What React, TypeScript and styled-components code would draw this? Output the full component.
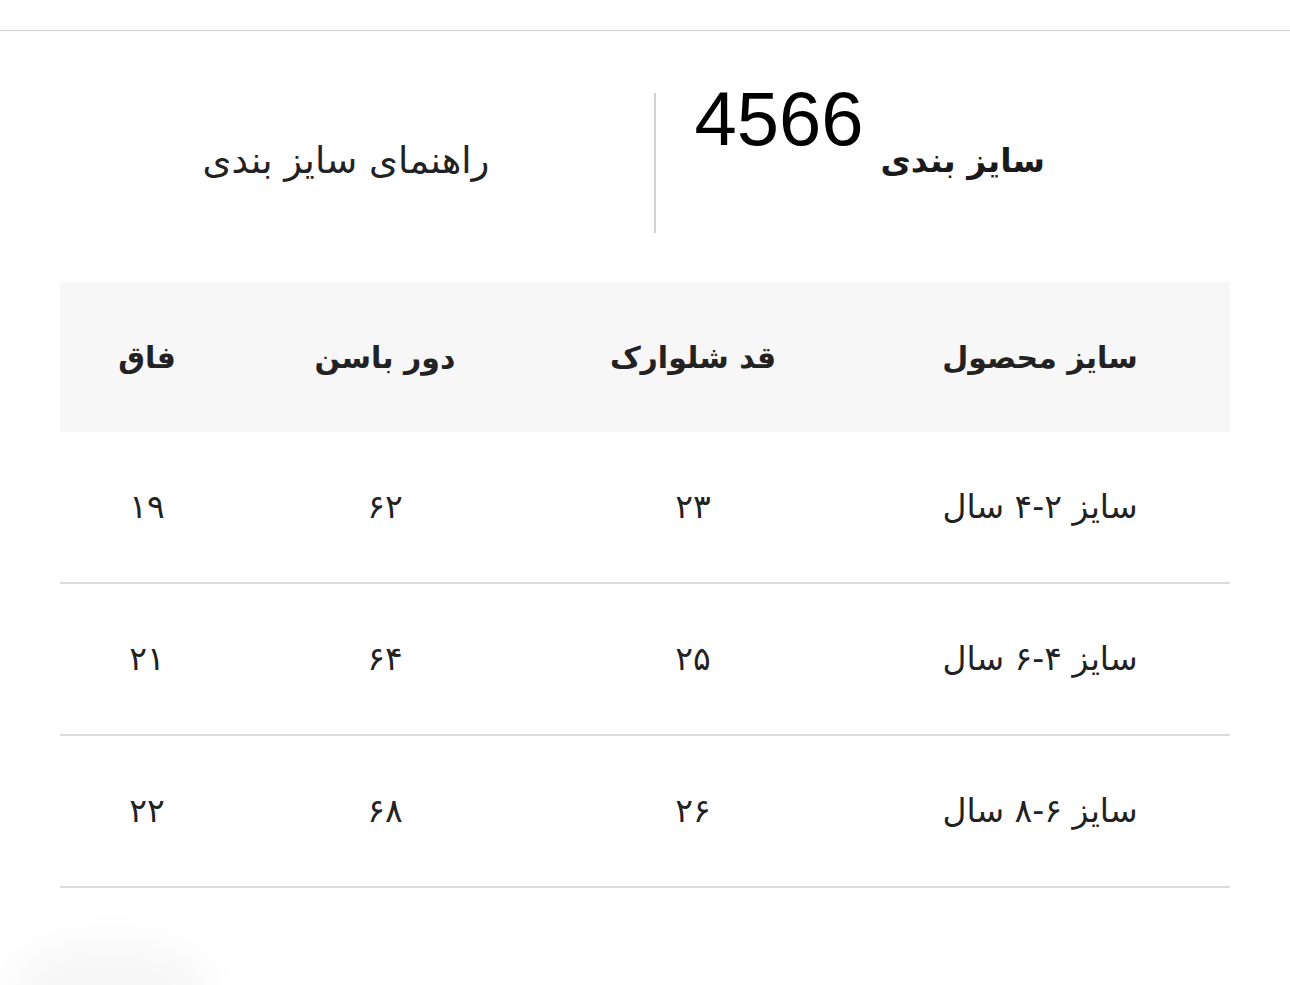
import React from "react";
import styled, {createGlobalStyle} from "styled-components";

const GlobalStyle = createGlobalStyle`
  html, body {
    margin: 0;
    padding: 0;
    background: #fff;
  }
  body {
    font-family: "DejaVu Sans", "Noto Sans", sans-serif;
    color: #222;
  }
`;

type Row = {size: string; length: string; hip: string; rise: string};

const rows: Row[] = [
  {size: "سایز ۲-۴ سال", length: "۲۳", hip: "۶۲", rise: "۱۹"},
  {size: "سایز ۴-۶ سال", length: "۲۵", hip: "۶۴", rise: "۲۱"},
  {size: "سایز ۶-۸ سال", length: "۲۶", hip: "۶۸", rise: "۲۲"},
];

const columns = [
  {title: "سایز محصول", width: 380},
  {title: "قد شلوارک", width: 314},
  {title: "دور باسن", width: 302},
  {title: "فاق", width: 174},
];

const App: React.FC = () => {
  return (
    <Page dir="rtl">
      <GlobalStyle/>
      <TopBar/>
      <Header>
        <TitleSide>
          <Title>سایز بندی</Title>
          <Code>4566</Code>
        </TitleSide>
        <Divider/>
        <GuideSide>
          <Guide>راهنمای سایز بندی</Guide>
        </GuideSide>
      </Header>
      <Table>
        <colgroup>
          {columns.map((c) => (
            <col key={c.title} style={{width: c.width}}/>
          ))}
        </colgroup>
        <thead>
          <tr>
            {columns.map((c) => (
              <Th key={c.title}>{c.title}</Th>
            ))}
          </tr>
        </thead>
        <tbody>
          {rows.map((r) => (
            <Tr key={r.size}>
              <Td>{r.size}</Td>
              <Td>{r.length}</Td>
              <Td>{r.hip}</Td>
              <Td>{r.rise}</Td>
            </Tr>
          ))}
        </tbody>
      </Table>
      <FloatShadow/>
    </Page>
  );
};

const Page = styled.div`
  width: 1290px;
  min-height: 985px;
  position: relative;
  overflow: hidden;
`;

const TopBar = styled.div`
  margin-top: 30px;
  height: 1px;
  background: #cfcfcf;
`;

const Header = styled.div`
  display: flex;
  align-items: stretch;
  padding: 62px 60px 0;
  height: 140px;
`;

const TitleSide = styled.div`
  width: 574px;
  display: flex;
  align-items: flex-start;
  padding-right: 185px;
  box-sizing: border-box;
`;

const Title = styled.h2`
  margin: 46px 0 0;
  font-family: "DejaVu Sans", sans-serif;
  font-weight: 700;
  font-size: 33px;
  line-height: 44px;
  color: #1a1a1a;
`;

const Code = styled.span`
  margin-right: 17px;
  margin-top: -19px;
  font-family: "Liberation Sans", Arial, sans-serif;
  font-size: 76px;
  line-height: 90px;
  color: #000;
`;

const Divider = styled.div`
  width: 2px;
  background: #d2d2d2;
`;

const GuideSide = styled.div`
  flex: 1;
  display: flex;
  justify-content: center;
  padding-right: 22px;
`;

const Guide = styled.div`
  margin-top: 44px;
  font-size: 37px;
  line-height: 48px;
  color: #222;
`;

const Table = styled.table`
  margin: 49px 60px 0;
  width: 1170px;
  border-collapse: collapse;
  table-layout: fixed;
`;

const Th = styled.th`
  height: 150px;
  padding: 0;
  background: #f7f7f7;
  font-weight: 700;
  font-size: 30px;
  color: #222;
  text-align: center;
`;

const Tr = styled.tr`
  border-bottom: 2px solid #dcdcdc;
`;

const Td = styled.td`
  height: 150px;
  padding: 0;
  font-size: 33px;
  line-height: 40px;
  color: #222;
  text-align: center;
`;

const FloatShadow = styled.div`
  position: absolute;
  left: 10px;
  top: 940px;
  width: 200px;
  height: 90px;
  border-radius: 50%;
  background: rgba(0, 0, 0, 0.03);
  filter: blur(18px);
`;

export default App;
